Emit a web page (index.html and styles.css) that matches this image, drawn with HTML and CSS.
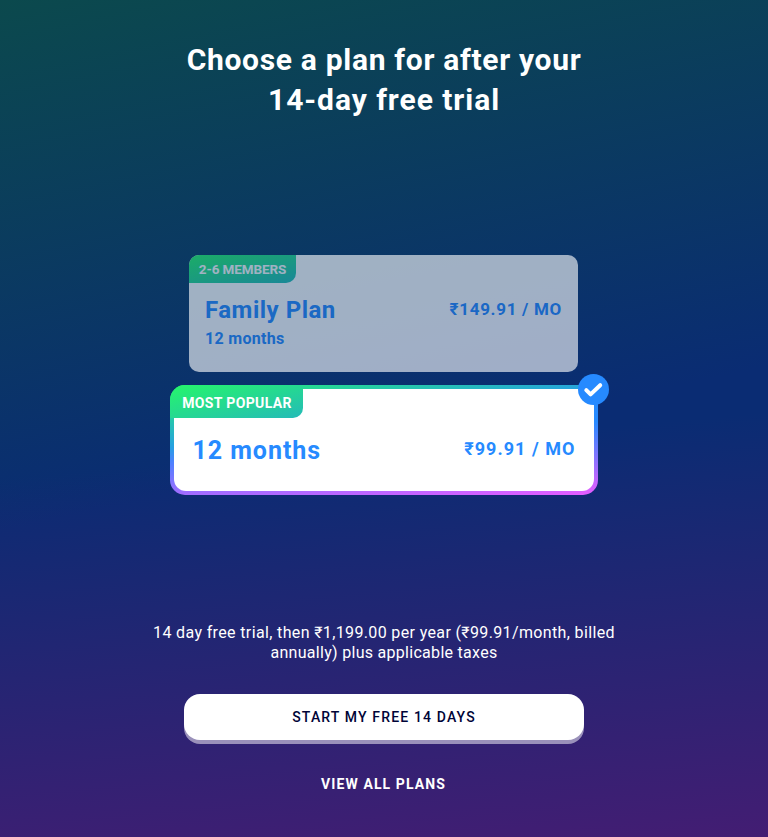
FILE: index.html
```html
<!DOCTYPE html>
<html lang="en">
<head>
<meta charset="utf-8">
<title>Choose a plan</title>
<link rel="stylesheet" href="styles.css">
</head>
<body>
<main class="page">
  <h1 class="title"><span class="title-first">Choose a plan for after your</span><br><span class="title-second">14-day free trial</span></h1>
  <section class="plans">
    <article class="plan plan-family">
      <span class="tag"><span class="tag-text">2-6 MEMBERS</span></span>
      <div class="row">
        <div>
          <h2 class="name"><span>Family Plan</span></h2>
          <p class="term"><span>12 months</span></p>
        </div>
        <p class="price"><span>₹149.91 / MO</span></p>
      </div>
    </article>
    <article class="plan plan-selected">
      <div class="inner">
        <h2 class="name"><span>12 months</span></h2>
        <p class="price"><span>₹99.91 / MO</span></p>
      </div>
      <span class="tag"><span class="tag-text">MOST POPULAR</span></span>
      <svg class="check" viewBox="0 0 31 31" aria-hidden="true"><circle cx="15.5" cy="15.5" r="15.5"/><path d="M8.3 16.1 12.6 20.4 22.2 11.2"/></svg>
    </article>
  </section>
  <p class="terms"><span class="terms-first">14 day free trial, then ₹1,199.00 per year (₹99.91/month, billed</span><br><span class="terms-second">annually) plus applicable taxes</span></p>
  <button class="start"><span>START MY FREE 14 DAYS</span></button>
  <a class="view"><span>VIEW ALL PLANS</span></a>
</main>
</body>
</html>
```
FILE: styles.css
```css
* { box-sizing: border-box; }
body {
  margin: 0;
  background: #000437;
  font-family: Roboto, "DejaVu Sans", sans-serif;
  color: #fff;
}
h1, h2, p { margin: 0; }
.page {
  height: 837px;
  padding-top: 40px;
  display: flex;
  flex-direction: column;
  align-items: center;
  background:
    linear-gradient(175deg, rgba(67,29,115,0) 53%, #431d73 100%),
    linear-gradient(168deg, #0b494d 0%, #0a2c73 53%);
}
.title { font-size: 30px; line-height: 40px; font-weight: 700; text-align: center; letter-spacing: .69px; }
.title-second { letter-spacing: .95px; }
.plans { width: 428px; margin: 135px 1px 0 0; display: flex; flex-direction: column; align-items: center; gap: 13px; }
.plan { position: relative; color: #268aff; }
.tag {
  position: absolute; top: 0; left: 0;
  display: flex; align-items: center; justify-content: center;
  color: #fff; font-weight: 700; font-size: 14px; white-space: nowrap;
  background: linear-gradient(166deg, #26f66a 0%, #24bbb8 100%);
}
.plan-family { width: 389px; height: 117px; padding: 39px 16px 0; border-radius: 10px; background: #fff; opacity: .61; }
.plan-family .tag { width: 107px; height: 28px; border-radius: 10px 0 10px 0; font-size: 13.5px; letter-spacing: -.1px; }
.row { display: flex; justify-content: space-between; align-items: flex-start; }
.name { font-size: 24px; line-height: 32px; font-weight: 700; letter-spacing: .5px; white-space: nowrap; }
.term { margin-top: 1px; font-size: 16px; line-height: 24px; font-weight: 700; letter-spacing: .3px; }
.price { font-size: 17px; line-height: 28px; font-weight: 700; letter-spacing: .7px; margin-top: 1px; white-space: nowrap; }
.plan-selected { width: 428px; height: 110px; padding: 4px; border-radius: 15px; background:
    linear-gradient(176.5deg, rgba(252,85,255,0) 46%, #e85cff 100%),
    linear-gradient(172deg, #26f66a 0%, #268aff 46%); }
.plan-selected .tag { width: 133px; height: 33px; padding: 3px 0 0 2px; border-radius: 15px 0 10px 0; letter-spacing: .35px; }
.inner { height: 102px; padding: 46px 18px 0 19px; border-radius: 12px; background: #fff; display: flex; justify-content: space-between; align-items: flex-start; }
.inner .name { font-size: 25px; letter-spacing: .95px; }
.inner .price { margin-top: 0; font-size: 18px; letter-spacing: 1.05px; }
.check { position: absolute; top: -11px; right: -11px; width: 31px; height: 31px; fill: #268aff; }
.check path { fill: none; stroke: #fff; stroke-width: 4; stroke-linecap: round; stroke-linejoin: round; }
.terms { margin-top: 128px; font-size: 16px; line-height: 20px; letter-spacing: .36px; text-align: center; white-space: nowrap; }
.terms-second { letter-spacing: .29px; }
.start {
  width: 400px; height: 46px; margin-top: 31px; padding: 0; border: 0; border-radius: 16px;
  background: #fff; color: #000437; box-shadow: 0 4px 0 #9a91ba;
  font: 500 14px Roboto, sans-serif; letter-spacing: 1.15px;
}
.view { margin: 34px 1px 0 0; font-size: 14px; line-height: 20px; font-weight: 700; letter-spacing: 1.1px; }
```
